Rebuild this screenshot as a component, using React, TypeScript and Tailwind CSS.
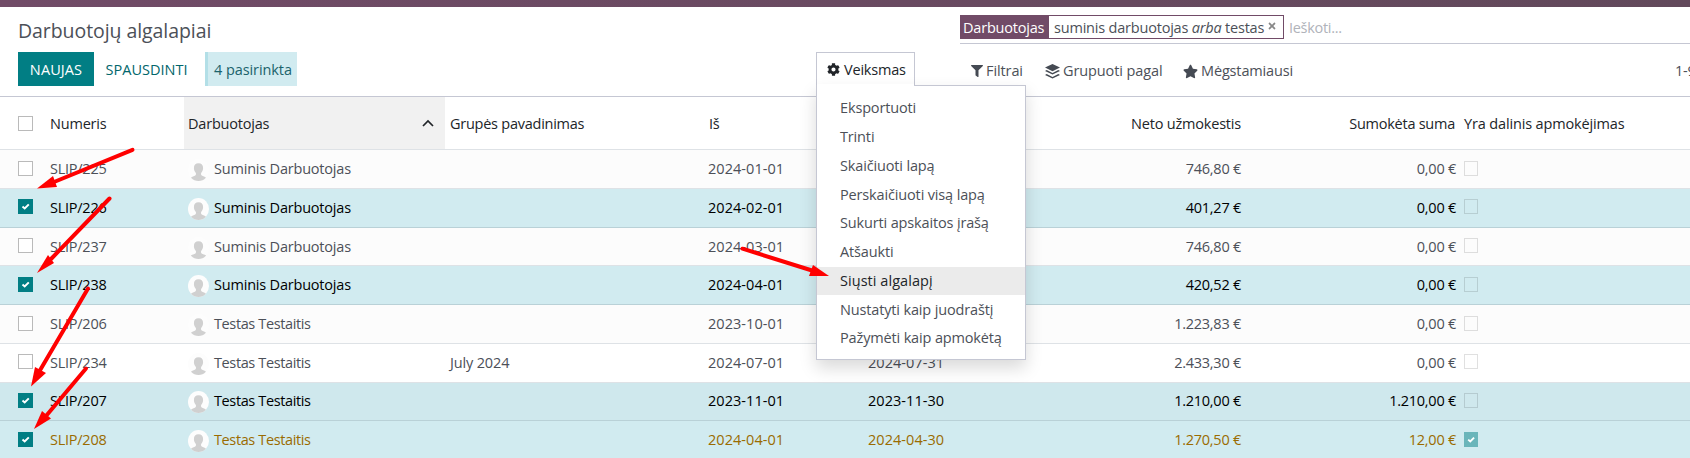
import { FaFilter, FaStar, FaCog, FaTimes } from "react-icons/fa";

const GRID = "grid grid-cols-[50px_134px_261px_259px_160px_380px_212px_1fr]";

type Row = {
  no: string; name: string; group?: string; from: string; to?: string;
  net: string; paid: string; partial?: boolean; selected?: boolean; kind: string; h: string; low?: boolean;
};

const MUTED = "bg-[#fcfcfc] border-[#dee2e6] text-[#4c5058]";
const SEL = "bg-[#d1ebf0] border-[#b9d1d7] text-black";
const rows: Row[] = [
  { no: "SLIP/225", name: "Suminis Darbuotojas", from: "2024-01-01", net: "746,80 €", paid: "0,00 €", kind: MUTED, h: "h-[39px] pt-[9px]", low: true },
  { no: "SLIP/226", name: "Suminis Darbuotojas", from: "2024-02-01", net: "401,27 €", paid: "0,00 €", selected: true, kind: SEL, h: "h-[39px] pt-[9px]" },
  { no: "SLIP/237", name: "Suminis Darbuotojas", from: "2024-03-01", net: "746,80 €", paid: "0,00 €", kind: MUTED, h: "h-[38px] pt-[9px]" },
  { no: "SLIP/238", name: "Suminis Darbuotojas", from: "2024-04-01", net: "420,52 €", paid: "0,00 €", selected: true, kind: SEL, h: "h-[39px] pt-[9px]", low: true },
  { no: "SLIP/206", name: "Testas Testaitis", from: "2023-10-01", net: "1.223,83 €", paid: "0,00 €", kind: MUTED, h: "h-[39px] pt-[9px]", low: true },
  { no: "SLIP/234", name: "Testas Testaitis", group: "July 2024", from: "2024-07-01", to: "2024-07-31", net: "2.433,30 €", paid: "0,00 €", kind: "bg-white border-[#dee2e6] text-[#4c5058]", h: "h-[39px] pt-[9px]" },
  { no: "SLIP/207", name: "Testas Testaitis", from: "2023-11-01", to: "2023-11-30", net: "1.210,00 €", paid: "1.210,00 €", selected: true, kind: "bg-[#cfe8ed] border-[#b9d1d7] text-black", h: "h-[38px] pt-[8px]", low: true },
  { no: "SLIP/208", name: "Testas Testaitis", from: "2024-04-01", to: "2024-04-30", net: "1.270,50 €", paid: "12,00 €", partial: true, selected: true, kind: "bg-[#d1ebf0] border-[#b9d1d7] text-[#9a6b01]", h: "h-[39px] pt-[9px]", low: true },
];

const menu = ["Eksportuoti", "Trinti", "Skaičiuoti lapą", "Perskaičiuoti visą lapą", "Sukurti apskaitos įrašą", "Atšaukti", "Siųsti algalapį", "Nustatyti kaip juodraštį", "Pažymėti kaip apmokėtą"];

function Check({ on, muted }: { on?: boolean; muted?: boolean }) {
  const size = muted ? "w-[14px] h-[15px]" : "w-[15px] h-[15px]";
  if (on)
    return (
      <span className={`block shrink-0 ${size} ${muted ? "bg-[#6ab5ba]" : "bg-[#017e84]"}`}>
        <svg viewBox="0 0 15 15" className="block w-full h-full">
          <path d="M4.500 7.600 6.700 9.500 10.800 5.400" fill="none" stroke="#fff" strokeWidth="2" />
        </svg>
      </span>
    );
  return <span className={`block shrink-0 border ${size} ${muted ? "border-black/12" : "border-[#bababa] bg-white"}`} />;
}

function Avatar() {
  return (
    <svg viewBox="0 0 21 22" className="w-[21px] h-[22px] shrink-0">
      <clipPath id="disc"><ellipse cx="10.5" cy="11" rx="10.5" ry="11" /></clipPath>
      <g clipPath="url(#disc)">
        <rect width="21" height="22" fill="#fdfdfd" />
        <path d="M10.5 4.2c-3 0-4.6 2-4.6 4.8 0 2 .8 3.8 2 5 .3 1.8-.2 2.4-1.600 2.900-2 .6-3.600 1.400-4.300 3.100V22h17v-2c-.7-1.700-2.300-2.500-4.300-3.100-1.400-.5-1.900-1.100-1.600-2.900 1.200-1.200 2-3 2-5 0-2.800-1.600-4.800-4.600-4.800z" fill="#d0d0d0" />
      </g>
    </svg>
  );
}

function Layers() {
  return (
    <svg viewBox="0 0 15 15" className="w-[15px] h-[15px] shrink-0" fill="#454a53">
      <path d="M7.500 0 15 3.600 7.500 7.300 0 3.600z" />
      <path d="M1.700 6 0 6.900l7.500 3.700L15 6.900 13.300 6 7.500 8.900z" />
      <path d="M1.700 10 0 10.900l7.500 3.700 7.500-3.700-1.700-.9-5.800 2.900z" />
    </svg>
  );
}

const arrows = [
  { line: "M132.500 149.800 54 182", head: "37,188.500 53,176 57,187" },
  { line: "M109.500 198.500 51 259", head: "37,273 48,255 54,263" },
  { line: "M88 288.500 39 372", head: "31,386.500 35,367 46,373" },
  { line: "M86 368.500 46 416", head: "34,429 42,411 51,418.500" },
  { line: "M742.500 248.700 812 270.500", head: "829,276 813,265 809,276" },
];

export default function App() {
  return (
    <div className="relative w-[1690px] h-[458px] overflow-hidden bg-white text-[14.500px] leading-5 text-[#4c5058] font-['Open_Sans','Noto_Sans',sans-serif] whitespace-nowrap tracking-[-0.2px]">
      <div className="h-[7px] bg-linear-to-r from-[#714b67] to-[#62495b]" />
      <header className="h-[90px] border-b border-[#c5c7d3] flex">
        <div className="w-[816px] pl-[18px] pt-[11px]">
          <h1 className="text-[19.500px] leading-[26px] tracking-[-0.07px]">Darbuotojų algalapiai</h1>
          <div className="flex mt-[8px] h-[34px] items-center">
            <button className="w-[76px] h-[34px] pt-px bg-[#017e84] text-white tracking-[0.1px]">NAUJAS</button>
            <button className="w-[105px] h-[34px] pt-px text-[#01666b] tracking-[0px]">SPAUSDINTI</button>
            <span className="ml-[6px] w-[92px] h-[34px] pl-[6px] pt-px flex items-center border-l-[3px] border-[#b3dfe7] bg-[#d1ebf0]">
              <span className="text-[#1b636c] tracking-[-0.08px]">4 pasirinkta</span>
            </span>
          </div>
        </div>
        <div className="w-[144px] pt-[45px]">
          <div className="relative w-[99px] h-[34px] border border-b-0 border-[#c5c7d3] bg-white z-20 flex items-center pl-[10px] gap-[4px] text-[#212529]">
            <FaCog size={13} />
            <span>Veiksmas</span>
            <ul className="absolute z-10 left-[-1px] top-[32px] w-[210px] h-[275px] border border-[#c5c7d3] bg-white pt-[8px] text-[#4c5058] tracking-[-0.15px] shadow-[0_8px_16px_rgba(0,0,0,0.15)]">
              {menu.map((m) => (
                <li key={m} className={`h-[28.750px] pl-[23px] flex items-center ${m === "Siųsti algalapį" ? "bg-[#ebebeb] text-[#212529] tracking-[0.05px]" : ""}`}>{m}</li>
              ))}
            </ul>
            <span className="absolute z-20 left-0 top-[31px] w-[97px] h-[2px] bg-white" />
          </div>
        </div>
        <div className="flex-1">
          <div className="h-[37px] border-b border-[#c5c7d3] pt-2 flex items-start">
            <div className="h-6 flex items-center border border-[#714b67]">
              <span className="w-[88px] h-full bg-[#714b67] text-white flex items-center pl-[2px] pt-px">Darbuotojas</span>
              <span className="w-[218px] pl-[5px] pt-px">suminis darbuotojas <i>arba</i> testas</span>
              <FaTimes size={10} className="text-[#888] w-[10px] mr-[6px] mb-[2px]" />
            </div>
            <span className="pl-[5px] pt-[3px] tracking-[-0.3px] text-[#b0b3ba]">Ieškoti...</span>
          </div>
          <div className="flex items-center pl-[11px] mt-[17px] h-[20px]">
            <FaFilter size={12} className="text-[#454a53]" />
            <span className="w-[62px] pl-[3px] tracking-[-0.1px]">Filtrai</span>
            <Layers />
            <span className="w-[123px] pl-[3px] tracking-[-0.1px]">Grupuoti pagal</span>
            <FaStar size={15} className="text-[#454a53]" />
            <span className="pl-[3px] tracking-[-0.15px]">Mėgstamiausi</span>
            <span className="ml-auto w-[15px]">1-9</span>
          </div>
        </div>
      </header>

      <div className={`${GRID} h-[53px] items-center border-b border-[#dee2e6] text-[#212529]`}>
        <div className="pl-[18px]"><Check /></div>
        <div className="pt-px">Numeris</div>
        <div className="h-full bg-[#f1f1f1] flex items-center justify-between pl-[4px] pr-[11px]">
          <span className="pt-px">Darbuotojas</span>
          <svg viewBox="0 0 12 8" className="w-3 h-2"><path d="M1 7 6 2l5 5" fill="none" stroke="#212529" strokeWidth="1.700" /></svg>
        </div>
        <div className="pl-[5px] pt-px tracking-[-0.25px]">Grupės pavadinimas</div>
        <div className="pl-[5px] pt-px">Iš</div>
        <div className="text-right pr-[3px] pt-px">Neto užmokestis</div>
        <div className="text-right pr-[1px] pt-px tracking-[-0.25px]">Sumokėta suma</div>
        <div className="pl-[8px] pt-px tracking-[-0.15px]">Yra dalinis apmokėjimas</div>
      </div>

      {rows.map((r) => (
        <div key={r.no} className={`${GRID} ${r.h} ${r.kind} items-start border-b tracking-[-0.25px]`}>
          <div className={r.low ? "pl-[18px] pt-[2px]" : "pl-[18px] pt-[1px]"}><Check on={r.selected} /></div>
          <div>{r.no}</div>
          <div className={`flex items-start pl-[4px] gap-[5px] ${r.name === "Testas Testaitis" ? "tracking-[-0.38px]" : "tracking-[-0.2px]"}`}><Avatar />{r.name}</div>
          <div className="pl-[5px] tracking-[-0.15px]">{r.group}</div>
          <div className="pl-[4px] tracking-[0.05px]">{r.from}</div>
          <div className="flex justify-between pl-[4px] pr-[3px]"><span className="tracking-[0.05px]">{r.to}</span><span>{r.net}</span></div>
          <div className="text-right">{r.paid}</div>
          <div className={r.low ? "pl-[8px] pt-[2px]" : "pl-[8px] pt-[1px]"}><Check on={r.partial} muted /></div>
        </div>
      ))}

      <svg viewBox="0 0 1690 458" className="absolute inset-0 z-30 w-full h-full pointer-events-none">
        {arrows.map((a) => (
          <g key={a.head} fill="#f00" stroke="none">
            <path d={a.line} stroke="#f00" strokeWidth="4" strokeLinecap="round" />
            <polygon points={a.head} />
          </g>
        ))}
      </svg>
    </div>
  );
}
